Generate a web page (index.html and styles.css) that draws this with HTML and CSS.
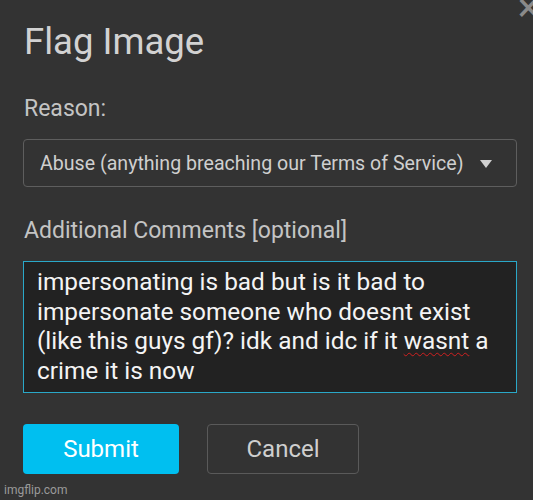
FILE: index.html
```html
<!DOCTYPE html>
<html lang="en">

<head>
    <meta charset="UTF-8">
    <title>Flag Image</title>
    <link rel="stylesheet" href="styles.css">
</head>

<body>
    <div class="modal">
        <span class="close">&times;</span>
        <h1>Flag Image</h1>

        <div class="label">Reason:</div>
        <div class="select">
            <span>Abuse (anything breaching our Terms of Service)</span>
            <span class="arrow"></span>
        </div>

        <div class="label">Additional Comments [optional]</div>
        <div class="comments">impersonating is bad but is it bad to impersonate someone who doesnt exist (like this guys gf)? idk and idc if it <span class="typo">wasnt</span> a crime it is now</div>

        <div class="buttons">
            <a class="btn btn-submit">Submit</a>
            <a class="btn btn-cancel">Cancel</a>
        </div>
    </div>
    <div class="watermark">imgflip.com</div>
</body>

</html>
```

FILE: styles.css
```css
body {
    font-family: Roboto, "Liberation Sans", sans-serif;
    margin: 0;
    padding: 0;
    background-color: #333333;
    width: 533px;
    height: 500px;
    overflow: hidden;
    position: relative;
}

.modal {
    padding: 18px 16px 0 23px;
}

.close {
    position: absolute;
    top: -12px;
    right: -6px;
    font-size: 40px;
    color: #8a8a8a;
    line-height: 1;
}

h1 {
    margin: 0 0 0 1px;
    font-size: 36.5px;
    font-weight: 400;
    color: #d2d2d2;
    line-height: 48px;
}

.label {
    font-size: 23px;
    color: #c4c4c4;
    margin-top: 29px;
    line-height: 28px;
    margin-left: 1px;
}

.select {
    margin-top: 16px;
    height: 46px;
    border: 1px solid #5e5e5e;
    border-radius: 4px;
    display: flex;
    align-items: center;
    justify-content: space-between;
    padding: 0 24px 0 16px;
    font-size: 19.6px;
    color: #cfcfcf;
}

.arrow {
    width: 0;
    height: 0;
    border-left: 6px solid transparent;
    border-right: 6px solid transparent;
    border-top: 8px solid #d0d0d0;
    margin-top: 2px;
}

.select + .label {
    margin-top: 30px;
}

.comments {
    margin-top: 16px;
    height: 122px;
    border: 1px solid #2aa8c8;
    background-color: #222222;
    padding: 5px 8px 3px 13px;
    font-size: 24.4px;
    line-height: 29.5px;
    color: #f4f4f4;
}

.typo {
    text-decoration: underline wavy #d02020;
    text-decoration-thickness: 1px;
    text-underline-offset: 3px;
}

.buttons {
    margin-top: 31px;
    display: flex;
    gap: 28px;
}

.btn {
    width: 156px;
    height: 50px;
    box-sizing: border-box;
    border-radius: 4px;
    display: flex;
    align-items: center;
    justify-content: center;
    font-size: 24px;
}

.btn-submit {
    background-color: #00bff0;
    color: #ffffff;
}

.btn-cancel {
    width: 152px;
    border: 1px solid #5a5a5a;
    color: #cfcfcf;
}

.watermark {
    position: absolute;
    left: 4px;
    bottom: 3px;
    font-size: 12px;
    color: #9a9a9a;
}
```
